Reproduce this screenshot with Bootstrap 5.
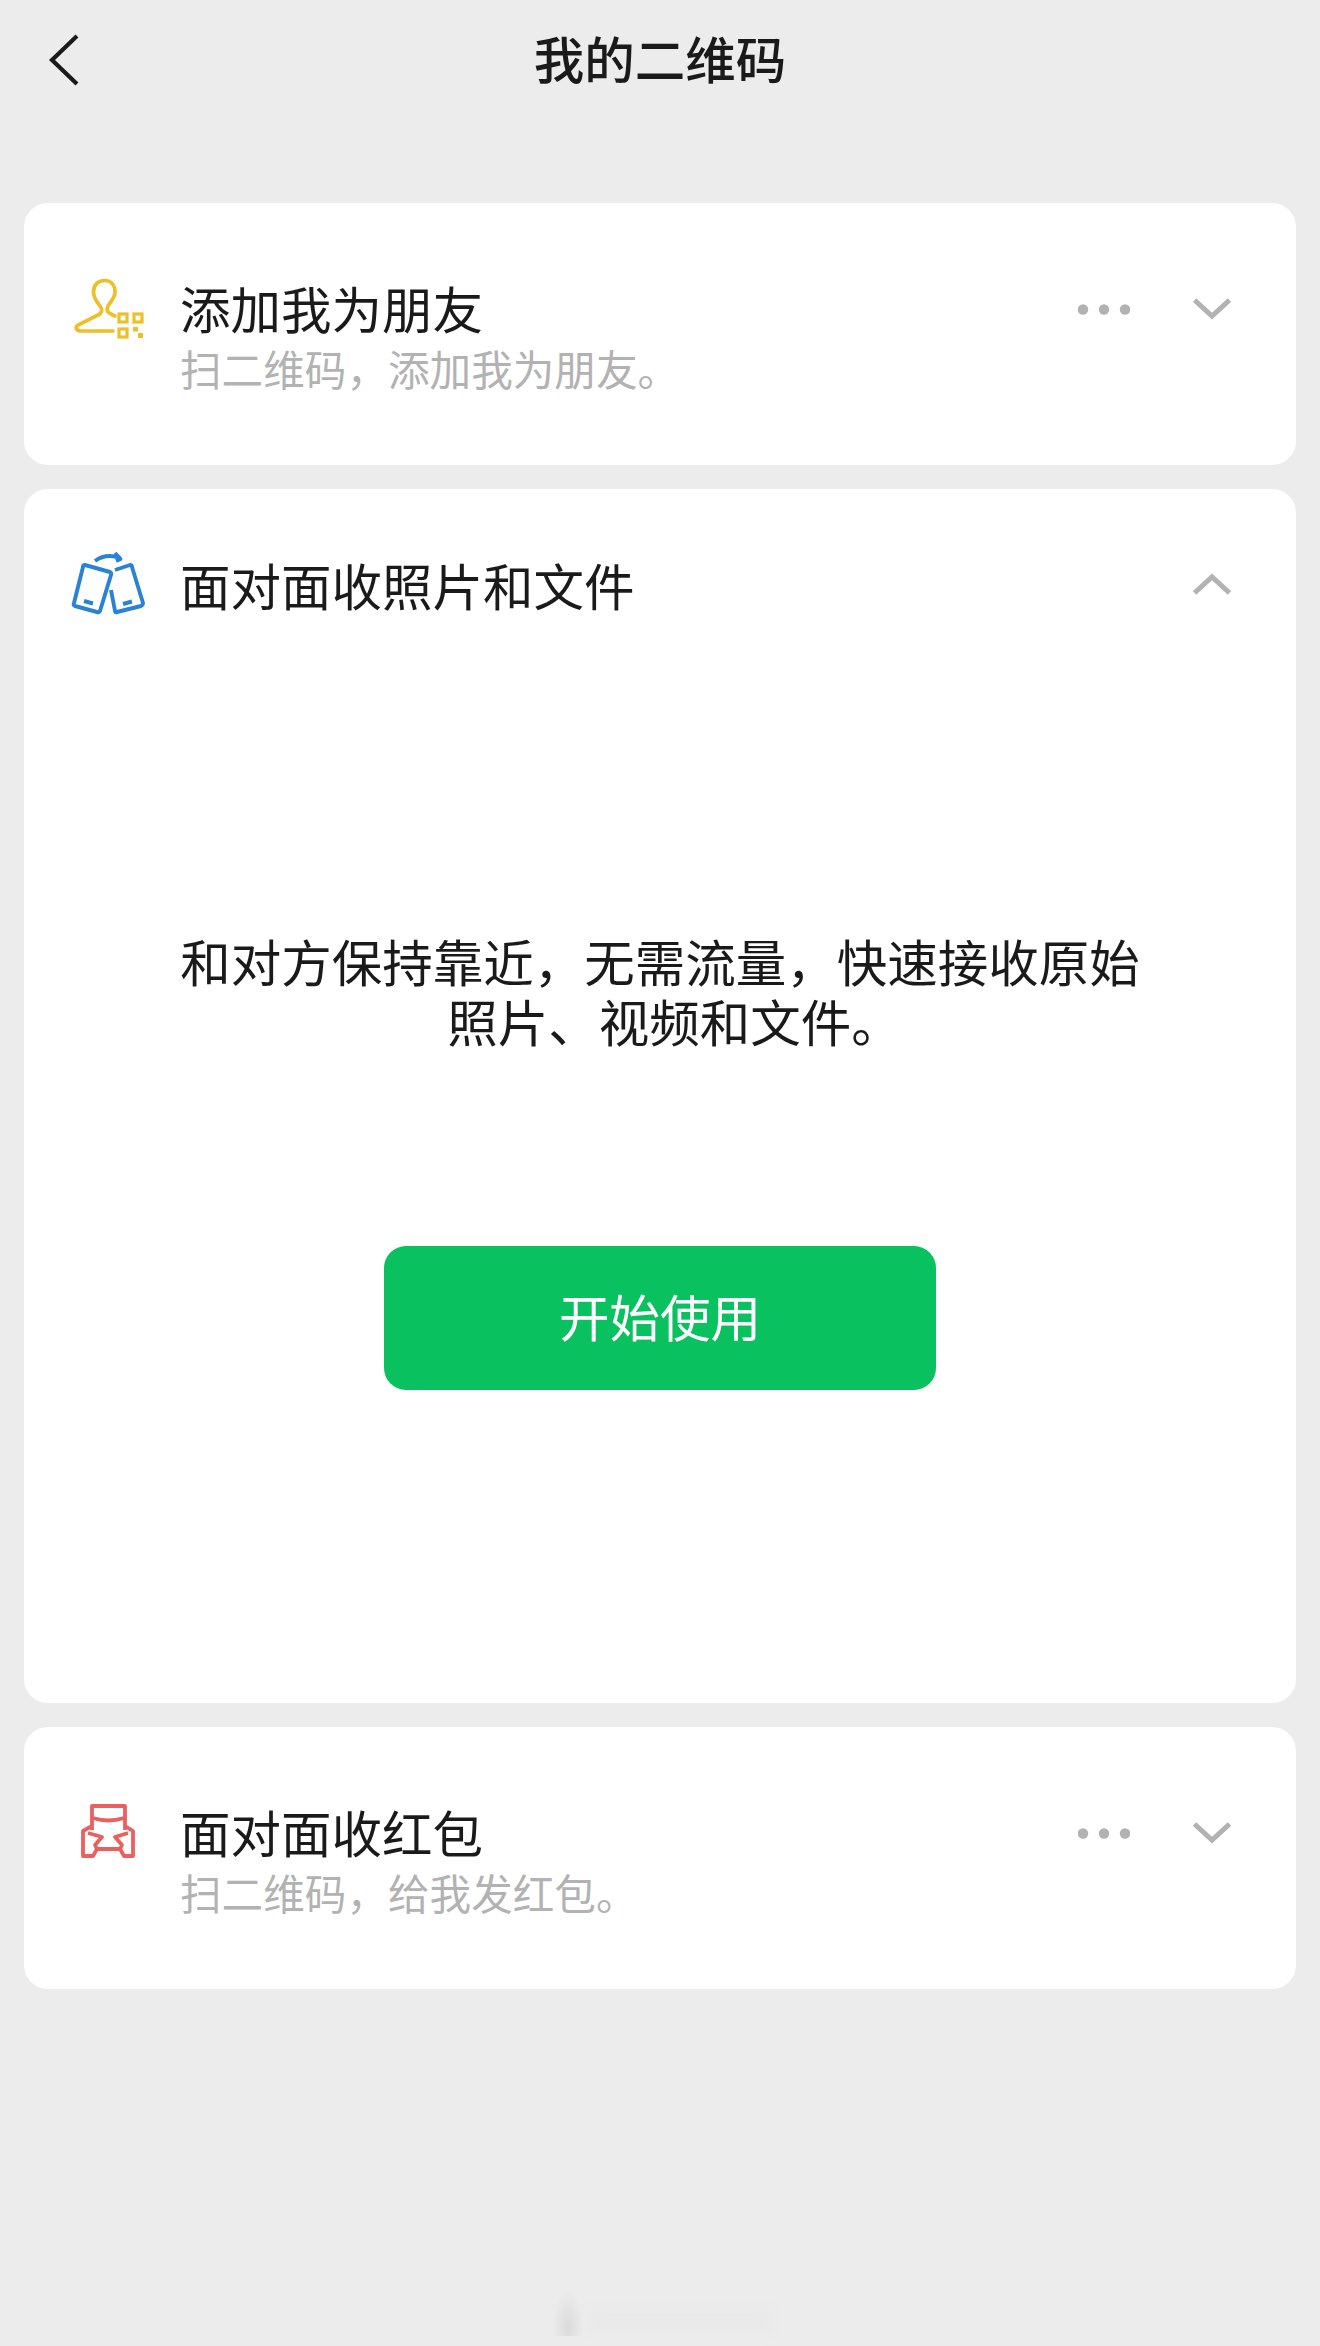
<!DOCTYPE html>
<html lang="zh-CN">
<head>
    <meta charset="utf-8">
    <title>我的二维码</title>
    <link rel="stylesheet" href="https://cdn.jsdelivr.net/npm/bootstrap@5.3.0/dist/css/bootstrap.min.css">
    <style>
        body { background: #ececec; font-family: "Noto Sans CJK SC", "Noto Sans", sans-serif; color: #1a1a1a; min-height: 2346px; position: relative; }
        .top-bar { display: grid; grid-template-columns: 1fr auto 1fr; align-items: center; height: 120px; padding: 0 48px; margin-bottom: 83px; }
        .top-title { font-size: 50.5px; font-weight: 500; line-height: 60px; margin-bottom: 6px; }
        .top-back { display: block; }
        .panels { padding: 0 24px; gap: 24px; }
        .panel { border: 0; border-radius: 24px; background: #fff; }
        .panel-short { height: 262px; }
        .panel-open { height: 1214px; }
        .panel-row { padding-left: 26px; padding-right: 65px; }
        .row-add { padding-top: 57px; }
        .row-face { padding-top: 51px; }
        .row-red { padding-top: 61px; }
        .row-text { margin-left: 10px; }
        .row-add .row-text { margin-top: 17px; }
        .row-face .row-text { margin-top: 14px; }
        .row-red .row-text { margin-top: 13px; }
        .row-title { font-size: 50.5px; line-height: 60px; }
        .row-sub { font-size: 41.6px; line-height: 62px; color: #b2b2b2; }
        .row-actions { gap: 63px; }
        .row-add .row-actions { margin-top: 38px; }
        .row-face .row-actions { margin-top: 33px; }
        .row-red .row-actions { margin-top: 34px; }
        .face-copy { font-size: 50.5px; line-height: 60px; margin-top: 300px; }
        .face-copy-end { padding-left: 29px; }
        .btn-start { background: #0ac15f; color: #fff; border: 0; border-radius: 22px; width: 552px; height: 144px; font-size: 50.5px; line-height: 60px; margin-top: 196px; padding-bottom: 12px; }
        .btn-start:hover { background: #0ac15f; color: #fff; }
        .mark-smudge { position: absolute; left: 552px; top: 2290px; width: 32px; height: 46px; background: radial-gradient(ellipse at 50% 80%, #dadada, #ececec 70%); }
        .mark-band { position: absolute; left: 590px; top: 2310px; width: 180px; height: 22px; background: #e9e9e9; filter: blur(6px); }
    </style>
</head>
<body>
    <!-- Cabecera -->
    <header class="top-bar">
        <svg class="top-back" width="32" height="52" viewBox="0 0 32 52"><path d="M29 2 L4 26 L29 50" fill="none" stroke="#1a1a1a" stroke-width="4.2"/></svg>
        <div class="top-title">我的二维码</div>
        <div></div>
    </header>

    <main class="panels d-flex flex-column">
        <!-- Añadir amigo -->
        <section class="card panel panel-short">
            <div class="panel-row row-add d-flex align-items-start">
                <svg width="120" height="90" viewBox="0 0 120 90" class="flex-shrink-0">
                    <path d="M63 71 H31 C26 71 25 67 28 65 L48 55 C52 53 53 50 50 46 C46 41 43.5 37 43.5 32 C43.5 25 48 20.5 54.5 20.5 C61 20.5 65 25 65 32 C65 38 61 41 58 46 C56 50 58 53 61 54 L65 56" fill="none" stroke="#edc02a" stroke-width="3.7" stroke-linecap="round"/>
                    <g fill="none" stroke="#edc02a" stroke-width="3.2">
                        <rect x="69" y="54" width="8" height="8"/>
                        <rect x="84" y="54" width="8" height="8"/>
                        <rect x="69" y="69" width="8" height="8"/>
                    </g>
                    <rect x="83" y="67" width="5" height="4.5" fill="#edc02a"/>
                    <rect x="88" y="73" width="5" height="5" fill="#edc02a"/>
                </svg>
                <div class="row-text flex-grow-1">
                    <div class="row-title">添加我为朋友</div>
                    <div class="row-sub">扫二维码，添加我为朋友。</div>
                </div>
                <div class="row-actions d-flex align-items-center">
                    <svg width="52" height="11" viewBox="0 0 52 11" fill="#b2b2b2"><circle cx="5" cy="5.5" r="5.2"/><circle cx="26" cy="5.5" r="5.2"/><circle cx="47" cy="5.5" r="5.2"/></svg>
                    <svg width="38" height="22" viewBox="0 0 38 22"><path d="M1.5 2 L19 18 L36.5 2" fill="none" stroke="#b2b2b2" stroke-width="5"/></svg>
                </div>
            </div>
        </section>

        <!-- Recibir fotos -->
        <section class="card panel panel-open">
            <div class="panel-row row-face d-flex align-items-start">
                <svg width="120" height="90" viewBox="0 0 120 90" class="flex-shrink-0">
                    <g fill="none" stroke="#2a82d6" stroke-width="3.9" stroke-linejoin="round">
                        <path d="M35 25 L60 32 Q62 33 61 35 L50 71 Q49 73 47 72 L25 66 Q23 65 24 63 L33 27 Q33 25 35 25 Z"/>
                        <path d="M65 30 L80 25 Q82 25 82 27 L93 63 Q93 65 91 66 L67 72 Q65 73 65 71 L61 50"/>
                        <path d="M34 61 L43 63.5 M73 64 L82 61.5"/>
                        <path d="M45 21 Q56 13 70 18"/>
                        <path d="M65 13 L70.5 19 L66 21"/>
                    </g>
                </svg>
                <div class="row-text flex-grow-1">
                    <div class="row-title">面对面收照片和文件</div>
                </div>
                <div class="row-actions d-flex align-items-center">
                    <svg width="38" height="22" viewBox="0 0 38 22"><path d="M1.5 20 L19 4 L36.5 20" fill="none" stroke="#b2b2b2" stroke-width="5"/></svg>
                </div>
            </div>
            <div class="face-copy text-center">
                <div>和对方保持靠近，无需流量，快速接收原始</div>
                <div class="face-copy-end">照片、视频和文件。</div>
            </div>
            <div class="text-center">
                <button type="button" class="btn btn-start">开始使用</button>
            </div>
        </section>

        <!-- Sobre rojo -->
        <section class="card panel panel-short">
            <div class="panel-row row-red d-flex align-items-start">
                <svg width="120" height="90" viewBox="0 0 120 90" class="flex-shrink-0">
                    <g fill="none" stroke="#e9605f" stroke-width="3.8" stroke-linejoin="round">
                        <path d="M42 42 V18 H75 V42"/>
                        <path d="M43 30 Q58 35 74 30"/>
                        <path d="M42 38 L33 43 V68 H43 L47 61 H70 L74 68 H83 V43 L75 38"/>
                        <path d="M38 45 L52 49 L45 57 L47 61"/>
                        <path d="M78 45 L65 49 L72 57 L70 61"/>
                    </g>
                </svg>
                <div class="row-text flex-grow-1">
                    <div class="row-title">面对面收红包</div>
                    <div class="row-sub">扫二维码，给我发红包。</div>
                </div>
                <div class="row-actions d-flex align-items-center">
                    <svg width="52" height="11" viewBox="0 0 52 11" fill="#b2b2b2"><circle cx="5" cy="5.5" r="5.2"/><circle cx="26" cy="5.5" r="5.2"/><circle cx="47" cy="5.5" r="5.2"/></svg>
                    <svg width="38" height="22" viewBox="0 0 38 22"><path d="M1.5 2 L19 18 L36.5 2" fill="none" stroke="#b2b2b2" stroke-width="5"/></svg>
                </div>
            </div>
        </section>
    </main>

    <!-- Marca de agua borrosa -->
    <div class="mark-smudge"></div>
    <div class="mark-band"></div>
    <script src="https://cdn.jsdelivr.net/npm/bootstrap@5.3.0/dist/js/bootstrap.bundle.min.js"></script>
</body>
</html>
